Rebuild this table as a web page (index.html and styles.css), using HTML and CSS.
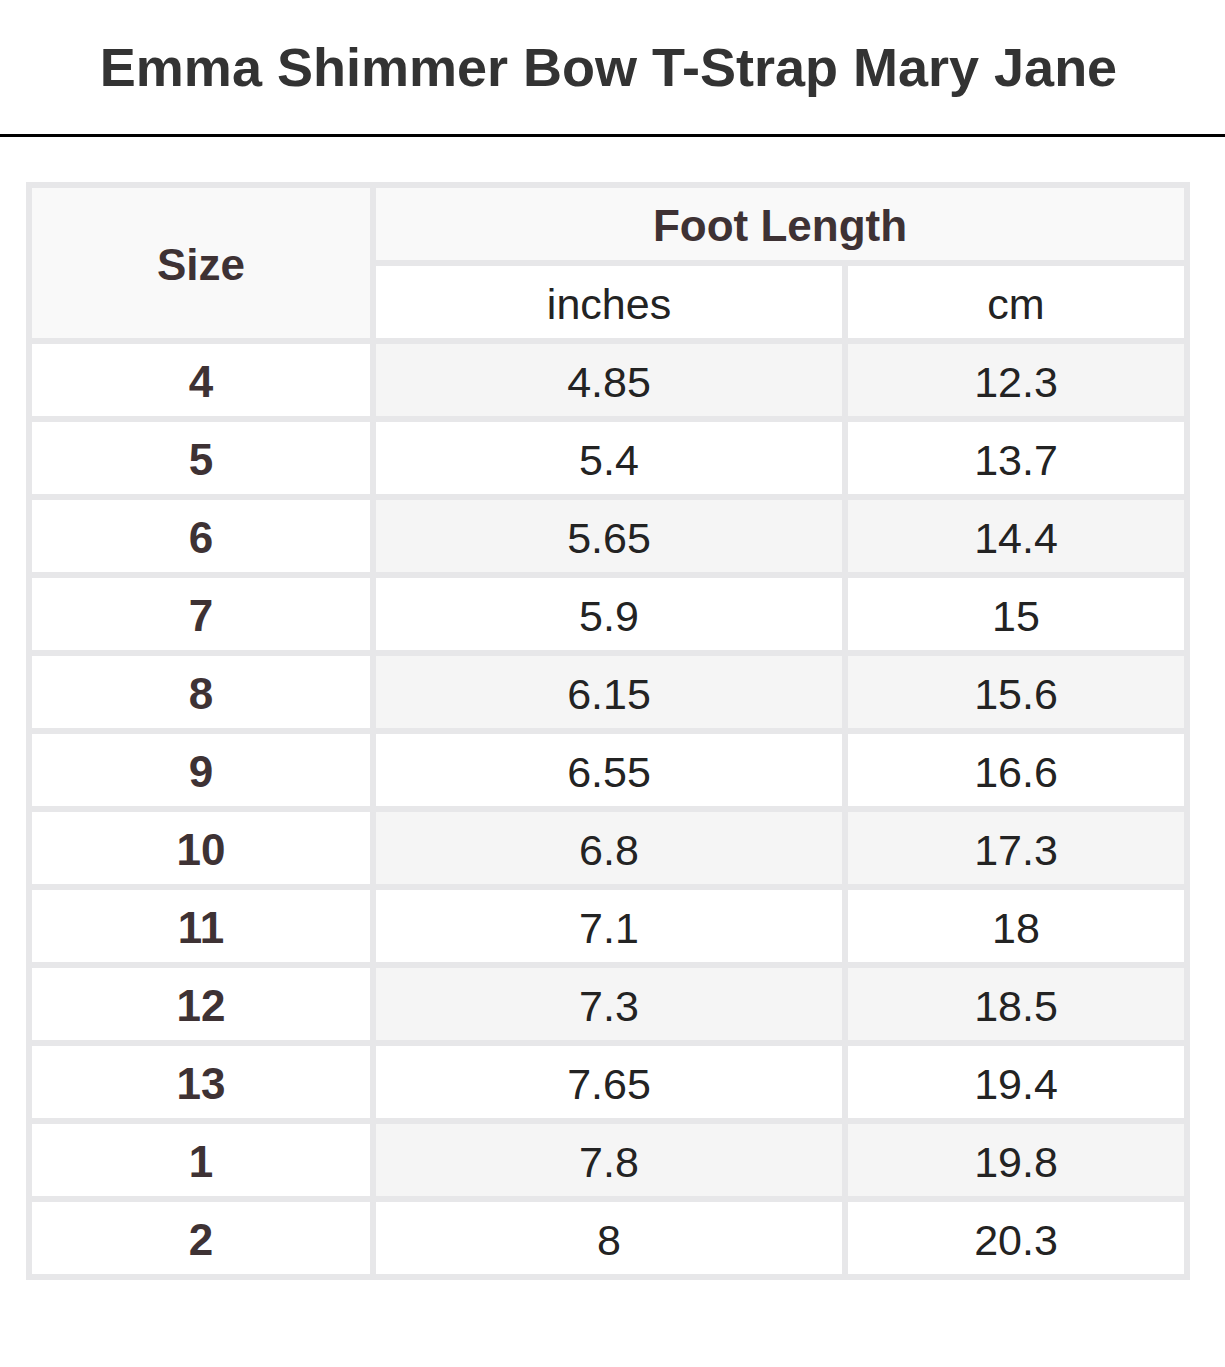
FILE: index.html
```html
<!DOCTYPE html>
<html lang="en">
<head>
<meta charset="utf-8">
<title>Emma Shimmer Bow T-Strap Mary Jane</title>
<link rel="stylesheet" href="styles.css">
</head>
<body>
<header class="title-bar">
  <h1 class="title">Emma Shimmer Bow T-Strap Mary Jane</h1>
</header>
<main class="content">
  <table class="size-table">
    <colgroup>
      <col class="col-size">
      <col class="col-in">
      <col class="col-cm">
    </colgroup>
    <thead>
      <tr>
        <th class="head-size" rowspan="2">Size</th>
        <th class="head-group" colspan="2">Foot Length</th>
      </tr>
      <tr>
        <th class="head-unit">inches</th>
        <th class="head-unit">cm</th>
      </tr>
    </thead>
    <tbody>
      <tr class="shade"><th>4</th><td>4.85</td><td>12.3</td></tr>
      <tr><th>5</th><td>5.4</td><td>13.7</td></tr>
      <tr class="shade"><th>6</th><td>5.65</td><td>14.4</td></tr>
      <tr><th>7</th><td>5.9</td><td>15</td></tr>
      <tr class="shade"><th>8</th><td>6.15</td><td>15.6</td></tr>
      <tr><th>9</th><td>6.55</td><td>16.6</td></tr>
      <tr class="shade"><th>10</th><td>6.8</td><td>17.3</td></tr>
      <tr><th>11</th><td>7.1</td><td>18</td></tr>
      <tr class="shade"><th>12</th><td>7.3</td><td>18.5</td></tr>
      <tr><th>13</th><td>7.65</td><td>19.4</td></tr>
      <tr class="shade"><th>1</th><td>7.8</td><td>19.8</td></tr>
      <tr><th>2</th><td>8</td><td>20.3</td></tr>
    </tbody>
  </table>
</main>
</body>
</html>
```

FILE: styles.css
```css
html, body {
  margin: 0;
  padding: 0;
  background: #ffffff;
}

body {
  font-family: "Liberation Sans", Arial, Helvetica, sans-serif;
  width: 1225px;
}

.title-bar {
  height: 137px;
  display: flex;
  align-items: center;
  justify-content: center;
  padding-right: 8px;
  padding-bottom: 1px;
  box-sizing: border-box;
  border-bottom: 3px solid #000000;
}

.title {
  margin: 0;
  font-size: 54px;
  font-weight: bold;
  color: #333333;
  line-height: 1;
}

.content {
  padding: 45px 0 0 26px;
}

.size-table {
  table-layout: fixed;
  width: 1164px;
  border-collapse: separate;
  border-spacing: 6px;
  background: #e7e7e9;
}

.col-size { width: 338px; }
.col-in { width: 466px; }
.col-cm { width: 336px; }

.size-table tr {
  height: 72px;
}

.size-table th,
.size-table td {
  padding: 4px 0 0;
  text-align: center;
  vertical-align: middle;
  background: #ffffff;
  line-height: 1;
}

.size-table th {
  font-size: 44px;
  font-weight: bold;
  color: #3e3234;
}

.size-table td {
  font-size: 43px;
  font-weight: normal;
  color: #232323;
}

.size-table .head-size,
.size-table .head-group {
  background: #f9f9f9;
}

.size-table .head-unit {
  font-weight: normal;
  font-size: 43px;
  color: #232323;
}

.size-table tr.shade td {
  background: #f5f5f5;
}
```
